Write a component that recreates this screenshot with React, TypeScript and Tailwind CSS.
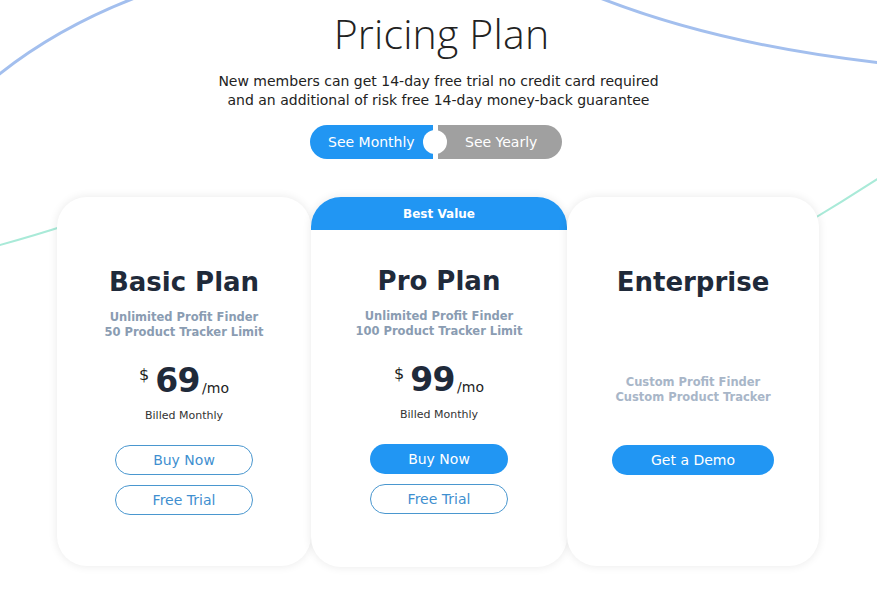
import React from 'react';

const font = { fontFamily: '"DejaVu Sans", "Open Sans", sans-serif' };

function Background() {
  return (
    <svg className="absolute inset-0" width="877" height="613" viewBox="0 0 877 613" fill="none">
      <path d="M-8,80 Q55,28 140,-4" stroke="#a3bfee" strokeWidth="3" />
      <path d="M600,-2 Q720,45 882,63" stroke="#a3bfee" strokeWidth="3" />
      <path d="M-4,246 Q30,237 70,224" stroke="#a9ead8" strokeWidth="2" />
      <path d="M805,224 Q845,200 882,176" stroke="#a9ead8" strokeWidth="2" />
    </svg>
  );
}

function OutlineButton({ label }: { label: string }) {
  return (
    <button className="w-[138px] h-[30px] rounded-full border border-[#4a97cf] text-[#3f8fd0] text-[14px] bg-white">
      {label}
    </button>
  );
}

function FilledButton({ label, wide }: { label: string; wide?: boolean }) {
  return (
    <button
      className={
        wide
          ? 'w-[162px] h-[30px] rounded-full bg-[#2196f3] text-white text-[14px]'
          : 'w-[138px] h-[30px] rounded-full bg-[#2196f3] text-white text-[14px]'
      }
    >
      {label}
    </button>
  );
}

function Price({ amount }: { amount: string }) {
  return (
    <div className="flex items-start justify-center h-[40px] mt-[21px] text-[#1f2a3a]">
      <span className="text-[16px] leading-[20px] mt-[4px] mr-[6px] text-[#222]">$</span>
      <span className="text-[33px] leading-[40px] font-bold tracking-[-0.5px]">{amount}</span>
      <span className="text-[14px] leading-[16px] mt-[19px] ml-[2px] text-[#222]">/mo</span>
    </div>
  );
}

export default function App() {
  return (
    <div className="relative w-full h-[613px] overflow-hidden bg-white" style={font}>
      <Background />
      <div className="relative z-10 flex flex-col items-center">
        <h1
          className="mt-[8px] ml-[6px] text-[41px] leading-[50px] font-light text-[#222] tracking-[0.2px]"
          style={{ fontFamily: '"Open Sans", sans-serif' }}
        >
          Pricing Plan
        </h1>
        <p className="mt-[14px] text-[14px] leading-[19px] text-[#222] text-center">
          New members can get 14-day free trial no credit card required
          <br />
          and an additional of risk free 14-day money-back guarantee
        </p>

        <div className="relative mt-[15px] mr-[5px] flex items-center h-[34px]">
          <div className="w-[123px] h-[34px] rounded-l-full bg-[#2196f3] text-white text-[14px] flex items-center pl-[18px]">
            See Monthly
          </div>
          <div className="w-[5px]" />
          <div className="w-[124px] h-[34px] rounded-r-full bg-[#a0a0a0] text-white text-[14px] flex items-center pl-[27px]">
            See Yearly
          </div>
          <div className="absolute left-[113px] top-[5px] w-[24px] h-[24px] rounded-full bg-white" />
        </div>

        <div className="mt-[38px] mr-[1px] flex">
          {/* Basic */}
          <div className="w-[254px] h-[369px] rounded-[30px] bg-white shadow-[0_0_10px_rgba(0,0,0,0.09)] flex flex-col items-center pt-[69px]">
            <h2 className="text-[26px] leading-[32px] font-bold text-[#1f2a3a]">Basic Plan</h2>
            <div className="mt-[12px] text-[11.5px] leading-[15px] font-bold text-[#8a9cb2] text-center">
              Unlimited Profit Finder
              <br />
              50 Product Tracker Limit
            </div>
            <Price amount="69" />
            <div className="mt-[8px] text-[11px] leading-[14px] text-[#333]">Billed Monthly</div>
            <div className="mt-[22px] flex flex-col gap-[10px]">
              <OutlineButton label="Buy Now" />
              <OutlineButton label="Free Trial" />
            </div>
          </div>

          {/* Pro */}
          <div className="w-[256px] h-[370px] rounded-[30px] bg-white shadow-[0_0_10px_rgba(0,0,0,0.09)] flex flex-col items-center overflow-hidden">
            <div className="w-full h-[33px] bg-[#2196f3] text-white text-[12px] font-bold flex items-center justify-center">
              Best Value
            </div>
            <h2 className="mt-[35px] text-[26px] leading-[32px] font-bold text-[#1f2a3a]">Pro Plan</h2>
            <div className="mt-[12px] text-[11.5px] leading-[15px] font-bold text-[#8a9cb2] text-center">
              Unlimited Profit Finder
              <br />
              100 Product Tracker Limit
            </div>
            <Price amount="99" />
            <div className="mt-[8px] text-[11px] leading-[14px] text-[#333]">Billed Monthly</div>
            <div className="mt-[22px] flex flex-col gap-[10px]">
              <FilledButton label="Buy Now" />
              <OutlineButton label="Free Trial" />
            </div>
          </div>

          {/* Enterprise */}
          <div className="w-[252px] h-[369px] rounded-[30px] bg-white shadow-[0_0_10px_rgba(0,0,0,0.09)] flex flex-col items-center pt-[69px]">
            <h2 className="text-[26px] leading-[32px] font-bold text-[#1f2a3a]">Enterprise</h2>
            <div className="mt-[77px] text-[11.5px] leading-[15px] font-bold text-[#a8b6c8] text-center">
              Custom Profit Finder
              <br />
              Custom Product Tracker
            </div>
            <div className="mt-[40px]">
              <FilledButton label="Get a Demo" wide />
            </div>
          </div>
        </div>
      </div>
    </div>
  );
}
